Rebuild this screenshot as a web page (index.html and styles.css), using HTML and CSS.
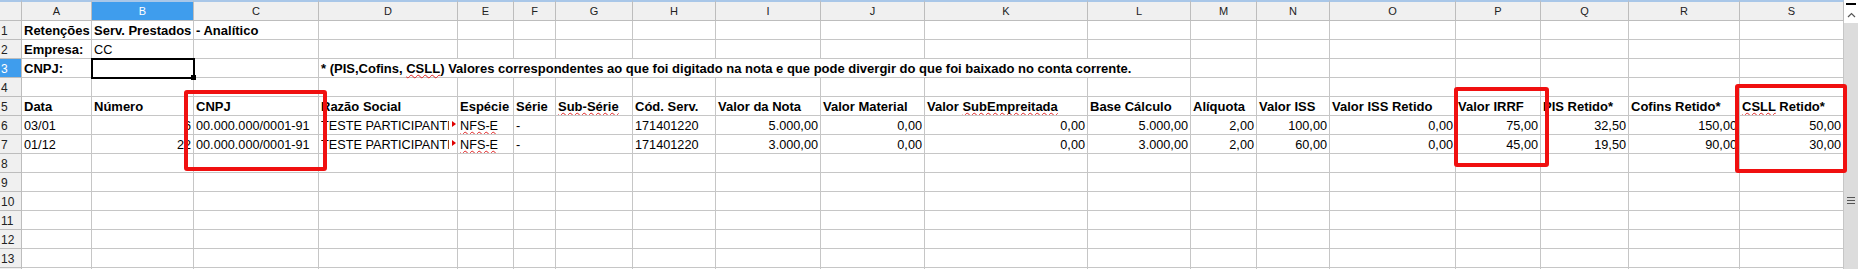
FILE: index.html
```html
<!DOCTYPE html>
<html lang="pt-BR">
<head>
  <meta charset="UTF-8">
  <meta name="viewport" content="width=device-width, initial-scale=1.0">
  <title>Retenções Serv. Prestados - Analítico</title>
  <link rel="stylesheet" href="styles.css">
</head>
<body>
  <div class="window">
    <div class="sheet" id="sheet"></div>
    <div class="scrollbar">
      <div class="scroll-button">
        <span class="scroll-cap"></span>
        <svg class="scroll-arrow" width="9" height="6" viewBox="0 0 9 6">
          <path d="M1 5 L4.5 1.5 L8 5" fill="none" stroke="#555" stroke-width="1.2"/>
        </svg>
      </div>
      <div class="scroll-thumb"><span class="grip"></span></div>
    </div>
    <div class="mark mark--cnpj"></div>
    <div class="mark mark--irrf"></div>
    <div class="mark mark--csll"></div>
  </div>
  <script>
    const sheet = document.getElementById("sheet");
    const letters = "ABCDEFGHIJKLMNOPQRS".split("");
    const typo = w => `<span class="typo">${w}</span>`;
    const bold = t => ({ text: t, bold: true });
    const num = t => ({ text: t, num: true });

    function dataRow(values) {
      return values.map(function(v, i) {
        if (i === 1 || i >= 8) return num(v);
        if (i === 3) return { text: v, clip: true };
        return v;
      });
    }

    const rows = {
      1: [bold("Retenções"), bold("Serv. Prestados"), bold("- Analítico")],
      2: [bold("Empresa:"), "CC"],
      3: [bold("CNPJ:"), { active: true }, "", {
        text: "* (PIS,Cofins, " + typo("CSLL") + ") Valores correspondentes ao que foi digitado na nota e que pode divergir do que foi baixado no conta corrente.",
        bold: true, overflow: true
      }],
      5: ["Data", "Número", "CNPJ", "Razão Social", "Espécie", "Série", typo("Sub-Série"), "Cód. Serv.",
          "Valor da Nota", "Valor Material", "Valor " + typo("SubEmpreitada"), "Base Cálculo", "Alíquota",
          "Valor ISS", "Valor ISS Retido", "Valor IRRF", "PIS Retido*", "Cofins Retido*", typo("CSLL") + " Retido*"].map(bold),
      6: dataRow(["03/01", "6", "00.000.000/0001-91", "TESTE PARTICIPANTE", typo("NFS-E"), "-", "", "171401220",
          "5.000,00", "0,00", "0,00", "5.000,00", "2,00", "100,00", "0,00", "75,00", "32,50", "150,00", "50,00"]),
      7: dataRow(["01/12", "22", "00.000.000/0001-91", "TESTE PARTICIPANTE", typo("NFS-E"), "-", "", "171401220",
          "3.000,00", "0,00", "0,00", "3.000,00", "2,00", "60,00", "0,00", "45,00", "19,50", "90,00", "30,00"])
    };

    let html = '<div class="cell corner"></div>';
    letters.forEach(function(l) {
      html += `<div class="cell col-head${l === "B" ? " is-selected" : ""}">${l}</div>`;
    });

    for (let r = 1; r <= 14; r++) {
      html += `<div class="cell row-head${r === 3 ? " is-selected" : ""}">${r}</div>`;
      const row = rows[r] || [];
      for (let c = 0; c < letters.length; c++) {
        let cell = row[c] || "";
        if (typeof cell === "string") cell = { text: cell };
        const classes = ["cell"];
        if (cell.bold) classes.push("cell--bold");
        if (cell.num) classes.push("cell--num");
        if (cell.active) classes.push("cell--active");
        if (cell.overflow) {
          // text runs over D..L, gridlines hidden underneath
          classes.push("cell--overflow");
          c += 8;
        }
        let inner = cell.text || "";
        if (cell.clip) {
          classes.push("cell--clip");
          inner = `<span class="clip-text">${inner}</span><i class="clip-mark"></i>`;
        }
        html += `<div class="${classes.join(" ")}">${inner}</div>`;
      }
    }
    sheet.innerHTML = html;
  </script>
</body>
</html>
```

FILE: styles.css
```css
body {
  margin: 0;
  background: #fff;
  overflow: hidden;
  font-family: "Liberation Sans", Arial, sans-serif;
}

.window {
  position: relative;
  display: flex;
  height: 269px;
  overflow: hidden;
}

.sheet {
  display: grid;
  grid-template-columns: 22px 70px 102px 125px 139px 56px 42px 77px 83px 105px 104px 163px 103px 66px 73px 126px 85px 88px 111px 104px;
  grid-template-rows: 21px repeat(14, 19px);
  width: 1844px;
  flex: none;
}

.cell {
  box-sizing: border-box;
  border-right: 1px solid #c6c6c6;
  border-bottom: 1px solid #c6c6c6;
  padding: 2px 2px 0 2px;
  font-size: 12.7px;
  line-height: 16px;
  white-space: nowrap;
  overflow: hidden;
  color: #000;
}

.cell--bold {
  font-weight: bold;
  font-size: 13px;
}

.cell--num {
  text-align: right;
}

.cell--overflow {
  grid-column: span 9;
  overflow: visible;
}

.cell--active {
  position: relative;
  overflow: visible;
  outline: 2px solid #000;
  outline-offset: -1px;
  z-index: 1;
}

.cell--active::after {
  content: "";
  position: absolute;
  right: -3px;
  bottom: -3px;
  width: 5px;
  height: 5px;
  background: #000;
}

.cell--clip {
  display: flex;
  padding-right: 1px;
}

.clip-text {
  flex: 1;
  overflow: hidden;
}

.clip-mark {
  flex: none;
  width: 0;
  height: 0;
  margin-top: 3px;
  margin-left: 3px;
  border-left: 4px solid #e00000;
  border-top: 3px solid transparent;
  border-bottom: 3px solid transparent;
}

.typo {
  text-decoration: underline wavy #e02020;
  text-decoration-thickness: 1px;
  text-underline-offset: 1px;
  text-decoration-skip-ink: none;
}

.corner,
.col-head {
  background: #f0f0f0;
  border-top: 2px solid #a9c7e8;
  border-right-color: #bdbdbd;
  border-bottom-color: #bdbdbd;
}

.col-head {
  padding: 1px 0 0;
  text-align: center;
  font-size: 11px;
  line-height: 17px;
  color: #222;
}

.row-head {
  background: #f0f0f0;
  border-right-color: #bdbdbd;
  border-bottom-color: #bdbdbd;
  padding-left: 1px;
  font-size: 12px;
  color: #222;
}

.is-selected {
  background: #3f9ded;
  color: #fff;
}

.scrollbar {
  width: 14px;
  display: flex;
  flex-direction: column;
  flex: none;
}

.scroll-button {
  height: 23px;
  background: #fff;
  display: flex;
  flex-direction: column;
  align-items: center;
}

.scroll-cap {
  width: 10px;
  height: 2px;
  margin-top: 3px;
  background: #000;
}

.scroll-arrow {
  margin-top: 7px;
}

.scroll-thumb {
  flex: 1;
  background: #dcdcdc;
  display: flex;
  justify-content: center;
}

.grip {
  width: 8px;
  height: 7px;
  margin-top: 174px;
  background: repeating-linear-gradient(#555 0 1px, transparent 1px 3px);
}

.mark {
  position: absolute;
  box-sizing: border-box;
  border: 4px solid #f01010;
  border-radius: 3px;
}

.mark--cnpj {
  left: 184px;
  top: 90px;
  width: 143px;
  height: 81px;
}

.mark--irrf {
  left: 1454px;
  top: 87px;
  width: 95px;
  height: 80px;
}

.mark--csll {
  left: 1735px;
  top: 84px;
  width: 112px;
  height: 89px;
}
```
